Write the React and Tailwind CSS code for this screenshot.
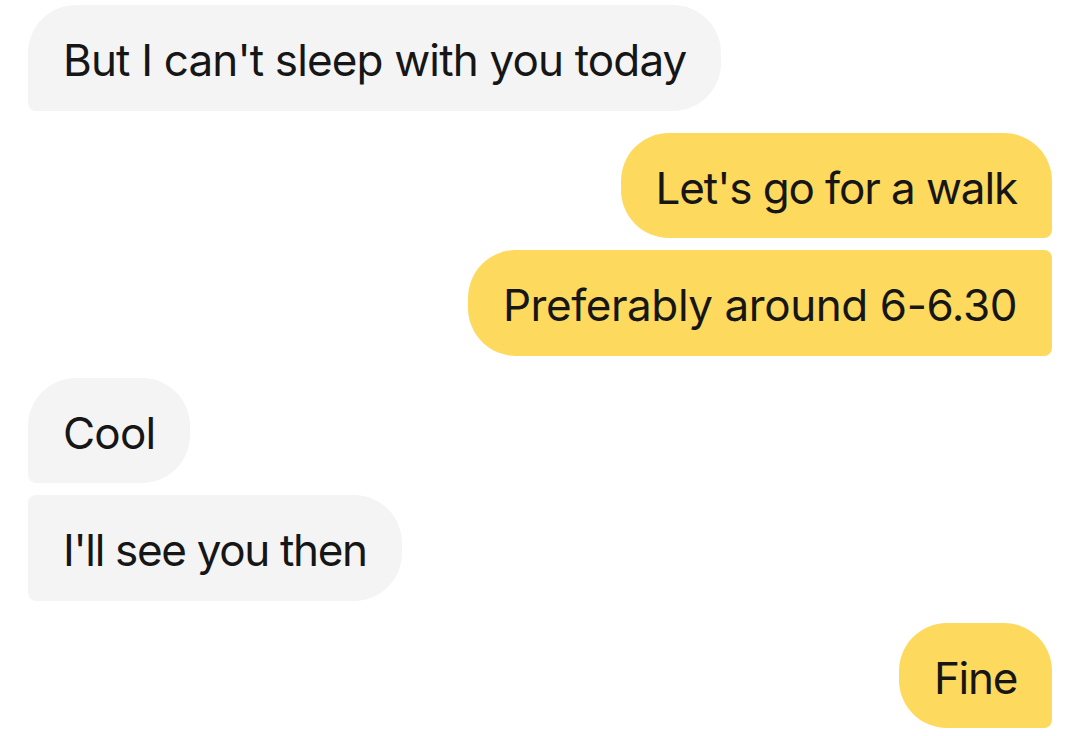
import React from "react";

const messages = [
  { id: 1, text: "But I can't sleep with you today", mine: false, first: true, track: "tracking-[-0.85px]" },
  { id: 2, text: "Let's go for a walk", mine: true, first: true, track: "tracking-[-1.1px]" },
  { id: 3, text: "Preferably around 6-6.30", mine: true, first: false, track: "tracking-[-0.43px]" },
  { id: 4, text: "Cool", mine: false, first: true, track: "tracking-[-0.8px]" },
  { id: 5, text: "I'll see you then", mine: false, first: false, track: "tracking-[-1.33px]" },
  { id: 6, text: "Fine", mine: true, first: true, track: "tracking-[-1.3px]" },
];

const Bubble = ({ msg }) => {
  let shape;
  if (msg.mine) {
    shape = msg.first
      ? "rounded-l-[48px] rounded-tr-[48px] rounded-br-[8px] bg-[#fdd95d]"
      : "rounded-l-[48px] rounded-r-[8px] bg-[#fdd95d]";
  } else {
    shape = msg.first
      ? "rounded-r-[48px] rounded-tl-[48px] rounded-bl-[8px] bg-[#f4f4f4]"
      : "rounded-r-[48px] rounded-l-[8px] bg-[#f4f4f4]";
  }
  return (
    <div className={`flex ${msg.mine ? "justify-end" : "justify-start"}`}>
      <div className={`${shape} ${msg.track} px-[35px] pt-[29px] pb-[23px] text-[44px] leading-[53.5px] text-[#161616] whitespace-nowrap`}>
        {msg.text}
      </div>
    </div>
  );
};

const App = () => {
  return (
    <div
      className="w-[1080px] h-[736px] bg-white overflow-hidden pl-[28px] pr-[28px] pt-[5px]"
      style={{ fontFamily: "Inter, 'Noto Sans', sans-serif" }}
    >
      <div className="flex flex-col">
        {messages.map((msg, i) => {
          const prev = messages[i - 1];
          const gap = !prev ? "" : prev.mine === msg.mine ? "mt-[12px]" : "mt-[22px]";
          return (
            <div key={msg.id} className={gap}>
              <Bubble msg={msg} />
            </div>
          );
        })}
      </div>
    </div>
  );
};

export default App;
